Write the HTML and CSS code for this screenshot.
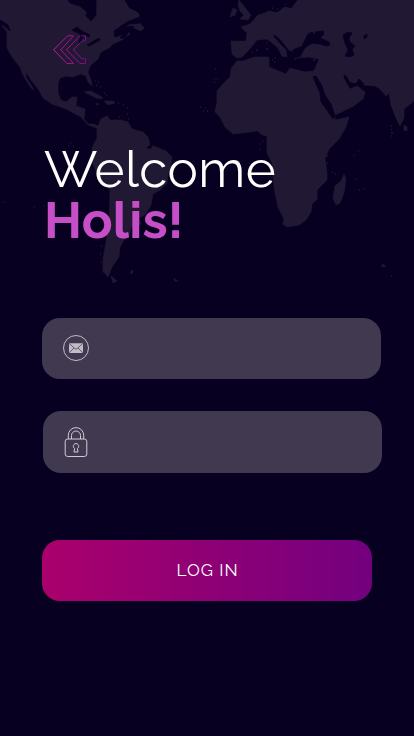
FILE: index.html
```html
<!DOCTYPE html>
<html lang="en">
<head>
<meta charset="utf-8">
<title>Log in</title>
<link rel="stylesheet" href="styles.css">
</head>
<body>
<svg class="map" viewBox="0 0 414 290" aria-hidden="true">
  <g class="land">
    <path d="M0 0H125L129 8L139 14L140 25L126 26L117 32L112 37L121 34L127 31L130 34L122 40L113 44L109 48L101 52L98 59L90 66L88 72L91 80L92 86L88 82L86 76L81 74L73 77L66 76L60 78L58 83L58 93L61 100L66 102L72 97L77 97L76 106L85 109L84 119L88 124L94 124L98 126L101 119L107 116L110 120L121 120L128 122L132 129L143 132L148 137L150 145L156 147L166 151L172 157L171 167L168 174L167 183L160 190L153 194L151 205L145 215L139 218L141 224L131 228L129 237L124 240L120 247L119 257L112 267L108 277L103 271L103 259L106 242L109 222L110 190L100 180L92 162L92 148L97 138L97 128L88 125L81 117L66 109L52 104L43 98L39 90L31 80L26 72L26 77L34 90L31 88L23 75L20 67L12 57L7 48L7 32L0 23Z"/>
    <path d="M268 0H414V101L404 109L404 118L400 126L396 118L391 105L389 93L386 96L380 89L375 86L364 85L360 82L356 83L350 82L347 76L343 74L344 79L350 89L357 86L365 92L363 99L352 107L335 115L335 120L349 117L346 127L339 139L329 149L325 159L327 172L327 180L317 190L317 199L312 204L311 212L306 220L299 225L287 227L283 224L284 219L278 207L274 188L272 163L267 153V136L262 135L258 131L250 132L233 134L225 127L220 117L215 112L217 102L217 91L223 84L230 77L231 69L237 61L243 61L254 57L269 57L269 67L286 74L290 68L305 72L314 71L319 59L308 57L296 58L294 52L289 50L281 40L274 34L273 36L280 44L286 50L287 57L282 56L278 48L270 41L266 39L257 40L253 45L248 51L242 57L237 58L232 54L231 41L246 41L247 33L241 27L250 24L258 15L268 12Z"/>
    <path d="M239 0L246 9L251 15L248 20L240 19L244 15L240 11L238 5ZM233 8L237 10L235 15L230 17ZM130 7L138 13L137 19L130 21ZM134 25L139 22L144 28L141 31L134 28ZM344 174L346 179L344 193L340 203L336 205L333 198L335 186L341 181ZM84 92L91 91L102 97L102 99L96 98ZM104 101L113 101L115 103L108 105ZM96 103L99 104L97 105ZM404 125L407 127L407 131L404 130ZM111 276L117 281L113 283ZM130 272L133 270L132 274ZM173 278L178 281L175 281ZM382 264L386 266L382 267Z"/>
  </g>
  <g class="water">
    <path d="M68 0L70 3L80 6L87 12L86 16L91 21L96 15L96 0ZM114 31L127 22L140 17L140 23L129 24L121 29L129 31L125 38L120 38L123 34L115 37ZM0 20L8 25L10 31L3 25L0 24ZM72 30L77 27L82 31L90 35L89 37L84 35L82 39L80 34ZM79 43L81 35L83 36L80 43ZM87 45L99 38L100 40L89 46Z"/>
    <path d="M304 42L308 34L312 32L316 36L315 32L323 31L324 34L320 38L329 42L330 45L326 46L320 44L313 43L307 46L304 49L301 48ZM343 35L348 32L352 33L349 38L350 42L355 46L352 49L354 55L350 57L345 56L348 50L345 43ZM364 36L367 34L367 37L364 39ZM313 77L316 76L322 86L325 95L331 104L335 116L333 119L327 110L321 102L320 93ZM267 0H297L291 8L285 6L277 12L268 10ZM231 33H246L243 40H232ZM359 79L364 84L360 86L356 84Z"/>
    <path d="M293 50L300 47L304 49L300 57L294 57ZM147 148L152 143L151 148ZM125 0H140V12L130 8Z"/>
  </g>
  <path class="isles" d="M70 143h1m-3 3h1m4 0h1M4 202h1m29 5h1m9-1h1M95 81h1m2 1h1m-3 3h1m3 2h1m3 6h1m1 2h1m11 8h1m4 2h1m3 3h1m-1 6h1m0 5h1m-10-2h1M215 69h1m-2 10h1m2 0h1m-4 3h1m-15 25h1m4 1h1m-3 3h1m3 0h1M262 141h1m-3 3h1m-2 5h1M327 156h1m-1 7h1m4 9h1m2 2h1m18-19h1m3-4h1m-4 28h1m3 11h1m3-1h1M391 126h1m-1 4h1m0 3h1m-2 3h1M101 246h1m-2 8h1m0 8h1m0 10h1M272 60h1m1 2h1m0-4h1m19 1h1m2-1h1m14 2h2M266 43h1m-1 6h2M252 52h1m3-2h2M391 276h1m-1-143h1M272 8h1m4 1h1m7-5h1"/>
</svg>
<main class="screen">
  <a class="back" href="#" aria-label="Back">
    <svg viewBox="0 0 34 30">
      <defs><linearGradient id="arrow" x1="0" x2="34" y1="0" y2="0" gradientUnits="userSpaceOnUse"><stop stop-color="#d415a2"/><stop offset="1" stop-color="#77087f"/></linearGradient></defs>
      <path d="M14.5 .8H20.5L7.8 14.8L20.5 28.5H14L.7 14.8ZM28 .8H32.5V5.5L28.5 6.5L20.5 14.8L28.5 23.5L32.5 24V28.5H27L13.5 14.8L27 .8"/>
    </svg>
  </a>
  <h1 class="title"><span class="hello">Welcome</span><span class="name">Holis!</span></h1>
  <form class="form">
    <label class="field">
      <svg class="mail" viewBox="0 0 28 28">
        <circle cx="14" cy="14" r="12.5"/>
        <rect x="7" y="9.3" width="14" height="9.6" rx=".8"/>
        <path d="M7.3 9.8L14 15.3L20.7 9.8M7.3 18.6L12 14M20.7 18.6L16 14"/>
      </svg>
    </label>
    <label class="field field-password">
      <svg class="lock" viewBox="0 0 24 32">
        <rect x="1.2" y="13" width="21.6" height="17.5" rx="2.5"/>
        <path d="M4.3 13V9.3a7.7 7.7 0 0 1 15.4 0V13M7.5 13V9.5a4.5 4.5 0 0 1 9 0V13M10.6 22.6a2.7 2.7 0 1 1 2.8 0L14 26H10Z"/>
      </svg>
    </label>
    <button class="login" type="button">LOG IN</button>
  </form>
</main>
</body>
</html>
```
FILE: styles.css
```css
* { box-sizing: border-box; }
body {
  margin: 0;
  height: 736px;
  overflow: hidden;
  background: #080020;
  font-family: Raleway, Lato, sans-serif;
}
.map { position: absolute; top: 0; left: 0; width: 414px; height: 290px; }
.land { fill: #211934; stroke: #211934; stroke-width: .6; stroke-linejoin: round; }
.water { fill: #080020; stroke: #080020; stroke-width: .8; stroke-linejoin: round; }
.isles { stroke: #211934; stroke-width: 1.3; fill: none; }
.screen { position: relative; padding: 35px 31px 0 42px; }
.back { display: block; width: 34px; height: 30px; margin-left: 11px; }
.back svg { display: block; width: 34px; height: 30px; fill: none; stroke: url(#arrow); stroke-width: 1; }
.title { margin: 79px 0 0 2px; height: 102px; line-height: 51px; font-size: 51px; }
.title span { display: block; height: 51px; white-space: nowrap; }
.hello { color: #fff; font-weight: 400; letter-spacing: .5px; }
.name { color: #c64fc8; font-weight: 700; letter-spacing: .2px; }
.form { padding-top: 72px; }
.field {
  display: flex;
  align-items: center;
  width: 339px;
  height: 61px;
  padding: 0 0 1px 20px;
  border-radius: 18px;
  background: #40394f;
}
.field-password { height: 62px; margin: 32px 0 0 1px; padding: 0 0 0 21px; }
.mail { width: 28px; height: 28px; fill: none; stroke: #c1bdc7; stroke-width: 1; }
.mail rect { fill: #c1bdc7; stroke: none; }
.mail path { stroke: #575064; stroke-width: .9; }
.lock { width: 24px; height: 32px; fill: none; stroke: #d0ccd4; stroke-width: 1; }
.login {
  display: block;
  width: 330px;
  height: 61px;
  margin-top: 67px;
  padding: 0 0 0 1px;
  border: 0;
  border-radius: 18px;
  background: linear-gradient(90deg, #aa006c, #73007f);
  color: #fff;
  font: 400 17px/61px Raleway, Lato, sans-serif;
  letter-spacing: 1px;
}
```
